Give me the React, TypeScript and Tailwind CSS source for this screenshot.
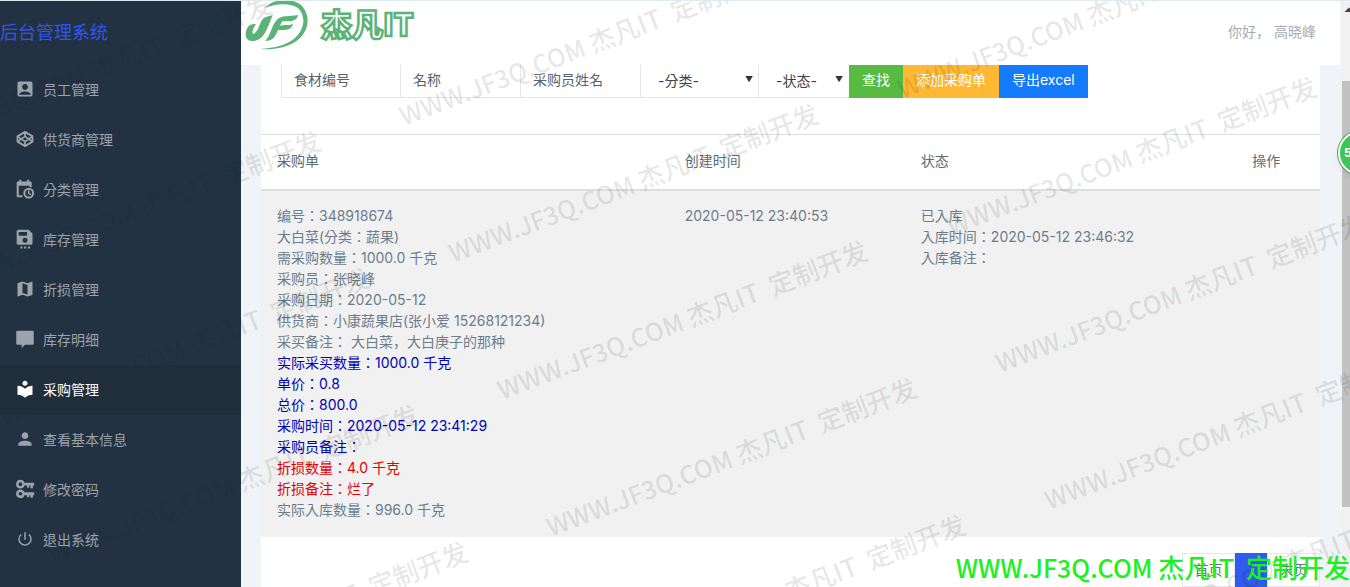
import React from 'react';
import {
  MdAccountBox,
  MdLocalLibrary,
  MdMap,
  MdPerson,
  MdPowerSettingsNew,
} from 'react-icons/md';

interface NavItem {
  label: string;
  icon: React.ReactNode;
  active?: boolean;
}

interface Line {
  text: string;
  tone?: string;
}

const SuppliersIcon = () => (
  <svg viewBox="0 0 24 24" className="size-[18px]" fill="none" stroke="currentColor" strokeWidth="2.4" strokeLinejoin="round">
    <path d="M12 2.5 L22 8.5 V15.5 L12 21.5 L2 15.5 V8.5 Z" />
    <path d="M2 8.5 L12 15.5 L22 8.5 M2 15.5 L12 8.5 L22 15.5 M12 2.5 V8.5 M12 15.5 V21.5" />
  </svg>
);

const CalendarClockIcon = () => (
  <svg viewBox="0 0 24 24" className="size-5" fill="currentColor">
    <path d="M5 1h2.500v2h7V1H17v2h1.500A1.500 1.500 0 0 1 20 4.500V10h-2.500V8h-13v11.500H9V22H3.500A1.500 1.500 0 0 1 2 20.500v-16A1.500 1.500 0 0 1 3.500 3H5z" />
    <path fillRule="evenodd" d="M16.500 10.500a6.500 6.500 0 1 0 0 13a6.500 6.500 0 0 0 0-13zM16.500 13a4 4 0 1 1 0 8a4 4 0 0 1 0-8z" />
    <path d="M15.500 13.500h1.800v3.200l2.400 1.400-.9 1.500-3.300-2z" />
  </svg>
);

const SaveIcon = () => (
  <svg viewBox="0 0 24 24" className="size-5" fill="currentColor">
    <path fillRule="evenodd" d="M4 1h12.500L21 5.500V17a2 2 0 0 1-2 2H4a2 2 0 0 1-2-2V3a2 2 0 0 1 2-2zM4.500 3.500v4.500h10V3.500zM12 10.500a3 3 0 1 0 0 6a3 3 0 0 0 0-6z" />
    <path d="M6.500 21h2.500v2.500H6.500zM11 21h2.500v2.500H11zM15.500 21H18v2.500h-2.500z" />
  </svg>
);

const CommentIcon = () => (
  <svg viewBox="0 0 24 24" className="size-5" fill="currentColor">
    <path d="M3 2h18A1.500 1.500 0 0 1 22.500 3.500v14a1.500 1.500 0 0 1-1.500 1.500H12l-4 4v-4H3a1.500 1.500 0 0 1-1.500-1.500v-14A1.500 1.500 0 0 1 3 2z" />
  </svg>
);

const KeysIcon = () => (
  <svg viewBox="0 0 24 24" className="size-5" fill="currentColor">
    <path fillRule="evenodd" d="M6.500 1a5.200 5.200 0 0 1 4.900 3.500H23v3.400H21.500V11h-3V7.900h-1.500V10.500h-2.500V7.900h-3.100A5.200 5.200 0 1 1 6.500 1zM6.500 4a2.200 2.200 0 1 0 0 4.400a2.200 2.200 0 0 0 0-4.400z" />
    <path fillRule="evenodd" d="M6.500 12.500a5.200 5.200 0 0 1 4.900 3.500H23v3.400H21.500V22.500h-3V19.400h-1.500V22h-2.500V19.400h-3.100A5.200 5.200 0 1 1 6.500 12.500zM6.500 15.500a2.200 2.200 0 1 0 0 4.400a2.200 2.200 0 0 0 0-4.400z" />
  </svg>
);

const navItems: NavItem[] = [
  { label: '员工管理', icon: <MdAccountBox className="size-5" /> },
  { label: '供货商管理', icon: <SuppliersIcon /> },
  { label: '分类管理', icon: <CalendarClockIcon /> },
  { label: '库存管理', icon: <SaveIcon /> },
  { label: '折损管理', icon: <MdMap className="size-5" /> },
  { label: '库存明细', icon: <CommentIcon /> },
  { label: '采购管理', icon: <MdLocalLibrary className="size-5" />, active: true },
  { label: '查看基本信息', icon: <MdPerson className="size-[22px]" /> },
  { label: '修改密码', icon: <KeysIcon /> },
  { label: '退出系统', icon: <MdPowerSettingsNew className="size-[18px]" /> },
];

const orderLines: Line[] = [
  { text: '编号：348918674' },
  { text: '大白菜(分类：蔬果)' },
  { text: '需采购数量：1000.0 千克' },
  { text: '采购员：张晓峰' },
  { text: '采购日期：2020-05-12' },
  { text: '供货商：小康蔬果店(张小爱 15268121234)' },
  { text: '采买备注： 大白菜，大白庚子的那种', tone: "font-[Inter,'Noto_Sans_CJK_JP',sans-serif]" },
  { text: '实际采买数量：1000.0 千克', tone: 'text-[#0000b4]' },
  { text: '单价：0.8', tone: 'text-[#0000b4]' },
  { text: '总价：800.0', tone: 'text-[#0000b4]' },
  { text: '采购时间：2020-05-12 23:41:29', tone: 'text-[#0000b4]' },
  { text: '采购员备注：', tone: 'text-[#0000b4]' },
  { text: '折损数量：4.0 千克', tone: 'text-[#e60000]' },
  { text: '折损备注：烂了', tone: 'text-[#e60000]' },
  { text: '实际入库数量：996.0 千克' },
];

const Logo = () => (
  <a href="#" aria-label="杰凡IT" className="flex items-start">
    <svg viewBox="0 0 176 50" className="h-[50px] w-44">
      <g fill="#5bb377">
        <path d="M24 7 C32 -3 52 -4 61 5 C71 16 67 33 54 41 C44 47 32 49 19 48 C34 47 46 44 54 37 C64 28 65 15 57 7 C48 1 34 3 24 7 Z" />
        <path d="M21 19 C23 16 28 15 32 14 C27 23 25 40 11 40 C4 40 3 32 7 26 C9 23 12 23 15 23 C10 30 11 35 14 32 C18 28 18 24 21 19 Z" />
        <path d="M35 20 C40 13 48 16 57 14 C56 20 50 21 43 20 C41 20 40 22 39 25 C43 23 47 25 52 23 C50 30 44 29 37 29 C34 36 32 40 24 40 C30 34 30 26 35 20 Z" />
      </g>
      <text
        x="80"
        y="35"
        fontSize="31"
        fontWeight="900"
        fontFamily="'Noto Sans CJK SC', sans-serif"
        fill="#ffffff"
        stroke="#5bb377"
        strokeWidth="2.5"
      >
        杰凡IT
      </text>
    </svg>
  </a>
);

const Sidebar = () => (
  <aside className="z-10 flex w-[241px] shrink-0 flex-col bg-[#0b1d2d]/90">
    <h1 className="h-16 pt-5 text-lg leading-6 text-[#2f55f0]">后台管理系统</h1>
    <nav className="flex flex-col">
      {navItems.map((item) => (
        <a
          key={item.label}
          href="#"
          className={`flex h-[50px] items-center gap-2 pb-0.5 pl-[15px] ${
            item.active ? 'bg-[#202d3b] text-white' : 'text-[#9ba3ac]'
          }`}
        >
          <span className="flex w-5 justify-center">{item.icon}</span>
          {item.label}
        </a>
      ))}
    </nav>
  </aside>
);

const TopBar = () => (
  <header className="mr-0.5 flex h-16 shrink-0 items-start justify-between bg-white pr-6">
    <Logo />
    <span className="pt-5 font-[Inter,'Noto_Sans_CJK_SC',sans-serif] text-[#a3abb5]">你好， 高晓峰</span>
  </header>
);

const inputClass =
  'h-[33px] w-[120px] border-r border-b border-[#e3e6ea] bg-white px-3 pb-1 text-[#4c5560] placeholder:text-[#59626c] outline-none';

const selectClass =
  'h-[33px] appearance-none border-b border-[#e3e6ea] bg-white pr-4 pb-0.5 pl-[17px] text-[#3c4248]';

const buttonClass = 'h-[33px] px-[13px] pb-1 text-white';

const Arrow = () => (
  <span className="pointer-events-none absolute top-1 right-1.5 text-[8px] text-[#333]">▼</span>
);

const SearchBar = () => (
  <form className="flex px-5" onSubmit={(e) => e.preventDefault()}>
    <input aria-label="食材编号" placeholder="食材编号" className={`${inputClass} border-l`} />
    <input aria-label="名称" placeholder="名称" className={inputClass} />
    <input aria-label="采购员姓名" placeholder="采购员姓名" className={inputClass} />
    <div className="relative">
      <select aria-label="分类" className={`${selectClass} w-[118px] border-r`}>
        <option>-分类-</option>
      </select>
      <Arrow />
    </div>
    <div className="relative">
      <select aria-label="状态" className={`${selectClass} w-[90px]`}>
        <option>-状态-</option>
      </select>
      <Arrow />
    </div>
    <button type="submit" className={`${buttonClass} bg-[#57bb43]`}>查找</button>
    <button type="button" className={`${buttonClass} bg-[#ffb833]`}>添加采购单</button>
    <button type="button" className={`${buttonClass} bg-[#147bfc]`}>导出excel</button>
  </form>
);

const OrderTable = () => (
  <table className="mt-9 w-full table-fixed text-left text-[#6c7c8b]">
    <colgroup>
      <col className="w-[38.5%]" />
      <col className="w-[22.3%]" />
      <col className="w-[31.3%]" />
      <col />
    </colgroup>
    <thead>
      <tr className="h-[55px] border-t border-b-2 border-[#dcdfe2] text-[#5c6b79]">
        <th className="px-4 pb-0.5 font-normal">采购单</th>
        <th className="px-4 pb-0.5 font-normal">创建时间</th>
        <th className="px-4 pb-0.5 font-normal">状态</th>
        <th className="px-4 pb-0.5 font-normal">操作</th>
      </tr>
    </thead>
    <tbody>
      <tr className="bg-[#f1f1f1] align-top">
        <td className="px-4 pt-3.5 pb-[17px]">
          {orderLines.map((line) => (
            <div key={line.text} className={`whitespace-pre ${line.tone ?? ''}`}>
              {line.text}
            </div>
          ))}
        </td>
        <td className="px-4 pt-3.5">2020-05-12 23:40:53</td>
        <td className="px-4 pt-3.5">
          <div>已入库</div>
          <div>入库时间：2020-05-12 23:46:32</div>
          <div>入库备注：</div>
        </td>
        <td />
      </tr>
    </tbody>
  </table>
);

const Pagination = () => (
  <nav className="flex justify-end pt-4">
    <a href="#" className="flex h-[34px] w-[53px] items-center justify-center border border-[#e3e6ea] text-[#6c6c8b]">首页</a>
    <a href="#" aria-label="1" className="h-[34px] w-8 bg-[#2f5bf0]" />
    <a href="#" className="flex h-[34px] w-[53px] items-center justify-center border border-[#e3e6ea] text-[#6c6c8b]">末页</a>
  </nav>
);

const Scrollbar = () => (
  <div className="flex w-2 shrink-0 flex-col overflow-hidden bg-[#f1f1f1]">
    <svg viewBox="0 0 8 80" className="h-20 w-2 shrink-0" fill="#404040">
      <path d="M2.500 11 L7 6.500 L8 7.500 V11 Z" />
    </svg>
    <div className="h-[426px] shrink-0 bg-[#c1c1c1]" />
  </div>
);

// Tiled page watermark, each row shifted along the slanted grid
const marks = [-1, 0, 1].flatMap((col) =>
  [-1, 0, 1, 2, 3, 4].map((row) => ({
    x: 404 + col * 498 + row * 49,
    y: 125 - col * 27 + row * 137,
  }))
);

const Watermark = () => (
  <svg className="pointer-events-none absolute inset-0 size-full" aria-hidden="true">
    <g
      fontSize="26"
      fontWeight="500"
      fontFamily="'Noto Sans CJK SC', sans-serif"
      fill="#000000"
      fillOpacity="0.1"
    >
      {marks.map((m) => (
        <text key={`${m.x}-${m.y}`} xmlSpace="preserve" transform={`translate(${m.x} ${m.y}) rotate(-21)`}>
          <tspan fontSize="25">WWW.JF3Q.COM</tspan> 杰凡IT{'  '}定制开发
        </text>
      ))}
    </g>
  </svg>
);

const App: React.FC = () => {
  return (
    <div className="relative flex h-screen overflow-hidden border-t border-[#dcecef] bg-[#f0f3f7] font-[Inter,'Noto_Sans_CJK_TC',sans-serif] text-sm leading-[21px]">
      <Sidebar />
      <div className="flex min-w-0 flex-1 flex-col">
        <TopBar />
        <main className="flex-1 pr-[22px] pl-5">
          <div className="min-h-full bg-white">
            <SearchBar />
            <OrderTable />
            <Pagination />
          </div>
        </main>
      </div>
      <Scrollbar />
      <Watermark />
      <div className="absolute top-[130px] -right-8 flex size-11 items-center rounded-full border-2 border-white bg-[#3fc458] pl-1 text-xs font-bold text-white shadow-md ring-1 ring-[#5a9a68]">
        5
      </div>
      <p className="absolute right-0 bottom-0 text-[26px] leading-10 font-medium whitespace-pre text-[#1ef01e] font-['Noto_Sans_CJK_SC',sans-serif]">
        <span className="text-[25px]">WWW.JF3Q.COM</span> 杰凡IT{'  '}定制开发
      </p>
    </div>
  );
};

export default App;
